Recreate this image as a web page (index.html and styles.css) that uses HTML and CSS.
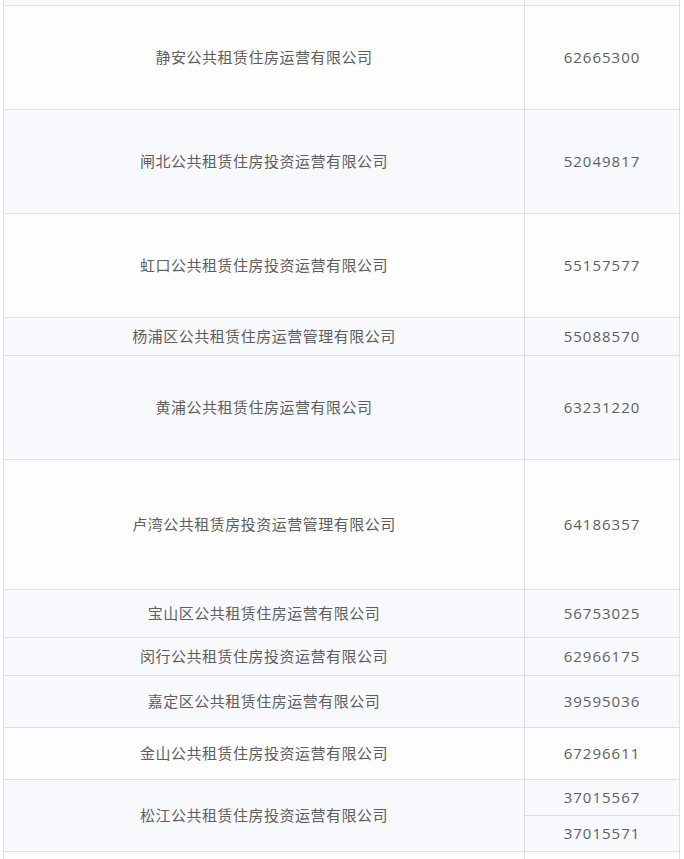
FILE: index.html
```html
<!DOCTYPE html>
<html lang="zh-CN">
<head>
<meta charset="utf-8">
<link rel="stylesheet" href="styles.css">
</head>
<body>
<table class="grid">
  <colgroup><col class="c-name"><col class="c-tel"></colgroup>
  <tr class="r-top"><td></td><td></td></tr>
  <tr class="h104 w"><td class="name">静安公共租赁住房运营有限公司</td><td class="tel">62665300</td></tr>
  <tr class="h104 b"><td class="name">闸北公共租赁住房投资运营有限公司</td><td class="tel">52049817</td></tr>
  <tr class="h104 w"><td class="name">虹口公共租赁住房投资运营有限公司</td><td class="tel">55157577</td></tr>
  <tr class="h38 b"><td class="name">杨浦区公共租赁住房运营管理有限公司</td><td class="tel">55088570</td></tr>
  <tr class="h104 b"><td class="name">黄浦公共租赁住房运营有限公司</td><td class="tel">63231220</td></tr>
  <tr class="h130 w"><td class="name">卢湾公共租赁房投资运营管理有限公司</td><td class="tel">64186357</td></tr>
  <tr class="h48 b"><td class="name">宝山区公共租赁住房运营有限公司</td><td class="tel">56753025</td></tr>
  <tr class="h38 b"><td class="name">闵行公共租赁住房投资运营有限公司</td><td class="tel">62966175</td></tr>
  <tr class="h52 b"><td class="name">嘉定区公共租赁住房运营有限公司</td><td class="tel">39595036</td></tr>
  <tr class="h52 w"><td class="name">金山公共租赁住房投资运营有限公司</td><td class="tel">67296611</td></tr>
  <tr class="h36 b"><td class="name" rowspan="2">松江公共租赁住房投资运营有限公司</td><td class="tel">37015567</td></tr>
  <tr class="h36 b"><td class="tel">37015571</td></tr>
  <tr class="h40 w"><td></td><td></td></tr>
</table>
</body>
</html>
```

FILE: styles.css
```css
html, body {
  margin: 0;
  padding: 0;
  background: #ffffff;
}
body {
  font-family: "Noto Sans CJK SC", "Open Sans", sans-serif;
  color: #5e5e5e;
}
.grid {
  border-collapse: collapse;
  table-layout: fixed;
  width: 676px;
  margin-left: 3px;
  margin-top: -1px;
}
.c-name { width: 521px; }
.c-tel { width: 155px; }
.grid td {
  border: 1px solid #dcdfe5;
  padding: 0 0 2px 0;
  text-align: center;
  vertical-align: middle;
  font-size: 15px;
  line-height: 20px;
}
.name {
  letter-spacing: 0.5px;
}
.tel {
  font-family: "Open Sans", "DejaVu Sans", sans-serif;
  letter-spacing: 1px;
  color: #606060;
}
.w td { background: #fdfdfd; }
.b td { background: #f7f9fc; }
.r-top td { height: 5px; background: #f7f9fc; padding: 0; }
.h104 td { height: 101px; }
.h130 td { height: 127px; }
.h38 td { height: 35px; }
.h48 td { height: 45px; }
.h52 td { height: 49px; }
.h36 td { height: 33px; }
.h40 td { height: 37px; }
```
